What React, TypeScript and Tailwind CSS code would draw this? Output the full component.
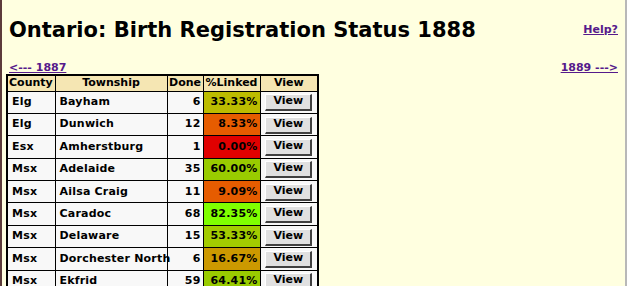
import { FC } from "react";

type Row = { county: string; township: string; done: number; pct: string; bg: string };

const rows: Row[] = [
  { county: "Elg", township: "Bayham", done: 6, pct: "33.33%", bg: "bg-[#bcbc00]" },
  { county: "Elg", township: "Dunwich", done: 12, pct: "8.33%", bg: "bg-[#e65c00]" },
  { county: "Esx", township: "Amherstburg", done: 1, pct: "0.00%", bg: "bg-[#e00000]" },
  { county: "Msx", township: "Adelaide", done: 35, pct: "60.00%", bg: "bg-[#99cc00]" },
  { county: "Msx", township: "Ailsa Craig", done: 11, pct: "9.09%", bg: "bg-[#e65c00]" },
  { county: "Msx", township: "Caradoc", done: 68, pct: "82.35%", bg: "bg-[#80ff00]" },
  { county: "Msx", township: "Delaware", done: 15, pct: "53.33%", bg: "bg-[#a3cc00]" },
  { county: "Msx", township: "Dorchester North", done: 6, pct: "16.67%", bg: "bg-[#cc9900]" },
  { county: "Msx", township: "Ekfrid", done: 59, pct: "64.41%", bg: "bg-[#99cc00]" },
];

const link = "text-[#551a8b] underline font-bold";

const App: FC = () => {
  return (
    <div
      className="h-[286px] w-[627px] overflow-hidden bg-[#ffffe0] border-l-2 border-l-[#5c3b3b] border-r-2 border-r-[#b8b8b8] text-black"
      style={{ fontFamily: '"DejaVu Sans", sans-serif' }}
    >
      <div className="pl-[7px] pr-[7px]">
        <div className="flex justify-between items-start pt-[18px]">
          <h1 className="text-[21px] leading-[24px] font-bold">Ontario: Birth Registration Status 1888</h1>
          <a href="#" className={`${link} text-[11px] leading-[14px] mt-[5px]`}>
            Help?
          </a>
        </div>
        <div className="flex justify-between text-[11px] leading-[14px] mt-[19px]">
          <a href="#" className={link}>&lt;--- 1887</a>
          <a href="#" className={link}>1889 ---&gt;</a>
        </div>
        <table className="table-fixed w-[311px] border-collapse border-2 border-black text-[11px] tracking-[0.2px] font-bold -ml-[3px] -mt-px">
          <colgroup>
            <col className="w-[48px]" />
            <col className="w-[112px]" />
            <col className="w-[36px]" />
            <col className="w-[57px]" />
            <col className="w-[58px]" />
          </colgroup>
          <thead>
            <tr className="bg-[#f5e6b3] h-[16px] leading-[14px] tracking-normal">
              <th className="border border-black px-[1px] text-left">County</th>
              <th className="border border-black">Township</th>
              <th className="border border-black px-0">Done</th>
              <th className="border border-black px-0">%Linked</th>
              <th className="border border-black">View</th>
            </tr>
          </thead>
          <tbody>
            {rows.map((r) => (
              <tr key={r.township} className="h-[22.4px] bg-[#f8f8f8]">
                <td className="border border-black pl-[4px]">{r.county}</td>
                <td className="border border-black pl-[4px] whitespace-nowrap">{r.township}</td>
                <td className="border border-black text-right pr-[2px]">{r.done}</td>
                <td className={`border border-black text-right pr-[2px] ${r.bg}`}>{r.pct}</td>
                <td className="border border-black text-center">
                  <button
                    type="button"
                    className="bg-[#e0e0e0] w-[47px] h-[17px] text-[11px] tracking-normal font-bold leading-[12px] pb-[2px] border border-t-white border-l-white border-r-[#404040] border-b-[#404040] border-r-2 border-b-2"
                  >
                    View
                  </button>
                </td>
              </tr>
            ))}
          </tbody>
        </table>
      </div>
    </div>
  );
};

export default App;
